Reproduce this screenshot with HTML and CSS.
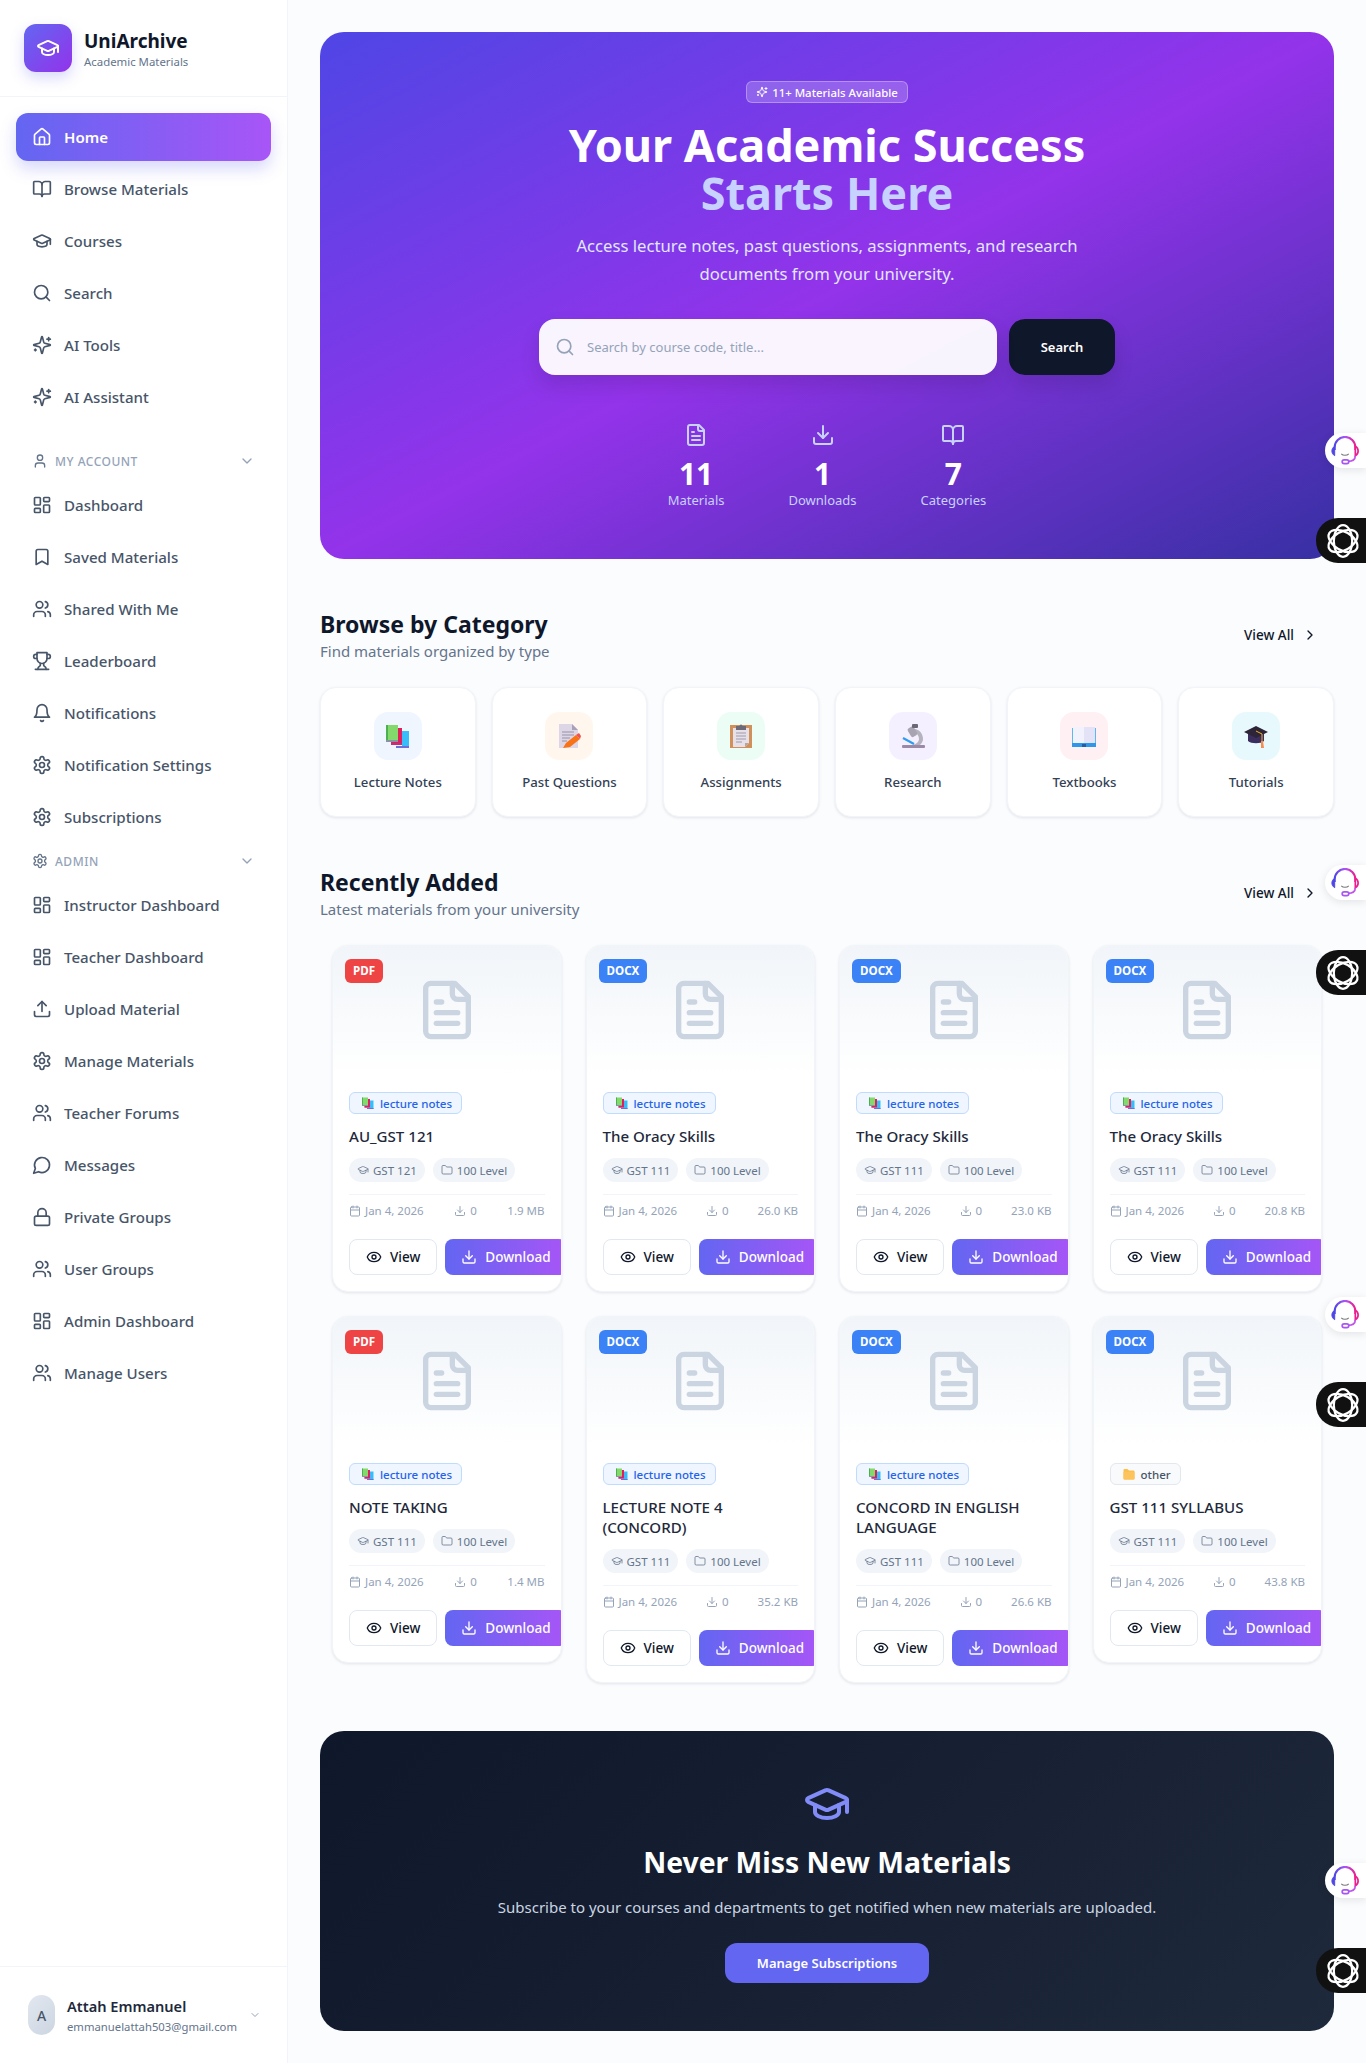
FILE: index.html
```html
<!DOCTYPE html>
<html lang="en">

<head>
    <meta charset="UTF-8">
    <meta name="viewport" content="width=device-width, initial-scale=1.0">
    <title>UniArchive</title>
    <link rel="stylesheet" href="styles.css">
</head>

<body>
    <!-- icon set -->
    <svg class="sprite" xmlns="http://www.w3.org/2000/svg">
        <symbol id="i-home" viewBox="0 0 24 24"><path d="M15 21v-8a1 1 0 0 0-1-1h-4a1 1 0 0 0-1 1v8"/><path d="M3 10a2 2 0 0 1 .709-1.528l7-5.999a2 2 0 0 1 2.582 0l7 5.999A2 2 0 0 1 21 10v9a2 2 0 0 1-2 2H5a2 2 0 0 1-2-2z"/></symbol>
        <symbol id="i-book" viewBox="0 0 24 24"><path d="M12 7v14"/><path d="M3 18a1 1 0 0 1-1-1V4a1 1 0 0 1 1-1h5a4 4 0 0 1 4 4 4 4 0 0 1 4-4h5a1 1 0 0 1 1 1v13a1 1 0 0 1-1 1h-6a3 3 0 0 0-3 3 3 3 0 0 0-3-3z"/></symbol>
        <symbol id="i-cap" viewBox="0 0 24 24"><path d="M21.42 10.922a1 1 0 0 0-.019-1.838L12.83 5.18a2 2 0 0 0-1.66 0L2.6 9.08a1 1 0 0 0 0 1.832l8.57 3.908a2 2 0 0 0 1.66 0z"/><path d="M22 10v6"/><path d="M6 12.5V16a6 3 0 0 0 12 0v-3.5"/></symbol>
        <symbol id="i-search" viewBox="0 0 24 24"><circle cx="11" cy="11" r="8"/><path d="m21 21-4.3-4.3"/></symbol>
        <symbol id="i-spark" viewBox="0 0 24 24"><path d="M9.937 15.5A2 2 0 0 0 8.5 14.063l-6.135-1.582a.5.5 0 0 1 0-.962L8.5 9.936A2 2 0 0 0 9.937 8.5l1.582-6.135a.5.5 0 0 1 .963 0L14.063 8.5A2 2 0 0 0 15.5 9.937l6.135 1.581a.5.5 0 0 1 0 .964L15.5 14.063a2 2 0 0 0-1.437 1.437l-1.582 6.135a.5.5 0 0 1-.963 0z"/><path d="M20 3v4"/><path d="M22 5h-4"/><path d="M4 17v2"/><path d="M5 18H3"/></symbol>
        <symbol id="i-user" viewBox="0 0 24 24"><path d="M19 21v-2a4 4 0 0 0-4-4H9a4 4 0 0 0-4 4v2"/><circle cx="12" cy="7" r="4"/></symbol>
        <symbol id="i-dash" viewBox="0 0 24 24"><rect x="3" y="3" width="7" height="9" rx="1"/><rect x="14" y="3" width="7" height="5" rx="1"/><rect x="14" y="12" width="7" height="9" rx="1"/><rect x="3" y="16" width="7" height="5" rx="1"/></symbol>
        <symbol id="i-bookmark" viewBox="0 0 24 24"><path d="m19 21-7-4-7 4V5a2 2 0 0 1 2-2h10a2 2 0 0 1 2 2v16z"/></symbol>
        <symbol id="i-users" viewBox="0 0 24 24"><path d="M16 21v-2a4 4 0 0 0-4-4H6a4 4 0 0 0-4 4v2"/><circle cx="9" cy="7" r="4"/><path d="M22 21v-2a4 4 0 0 0-3-3.87"/><path d="M16 3.13a4 4 0 0 1 0 7.75"/></symbol>
        <symbol id="i-trophy" viewBox="0 0 24 24"><path d="M6 9H4.5a2.5 2.5 0 0 1 0-5H6"/><path d="M18 9h1.5a2.5 2.5 0 0 0 0-5H18"/><path d="M4 22h16"/><path d="M10 14.66V17c0 .55-.47.98-.97 1.21C7.85 18.75 7 20.24 7 22"/><path d="M14 14.66V17c0 .55.47.98.97 1.21C16.15 18.75 17 20.24 17 22"/><path d="M18 2H6v7a6 6 0 0 0 12 0V2Z"/></symbol>
        <symbol id="i-bell" viewBox="0 0 24 24"><path d="M6 8a6 6 0 0 1 12 0c0 7 3 9 3 9H3s3-2 3-9"/><path d="M10.3 21a1.94 1.94 0 0 0 3.4 0"/></symbol>
        <symbol id="i-gear" viewBox="0 0 24 24"><path d="M12.22 2h-.44a2 2 0 0 0-2 2v.18a2 2 0 0 1-1 1.73l-.43.25a2 2 0 0 1-2 0l-.15-.08a2 2 0 0 0-2.73.73l-.22.38a2 2 0 0 0 .73 2.73l.15.1a2 2 0 0 1 1 1.72v.51a2 2 0 0 1-1 1.74l-.15.09a2 2 0 0 0-.73 2.73l.22.38a2 2 0 0 0 2.73.73l.15-.08a2 2 0 0 1 2 0l.43.25a2 2 0 0 1 1 1.73V20a2 2 0 0 0 2 2h.44a2 2 0 0 0 2-2v-.18a2 2 0 0 1 1-1.73l.43-.25a2 2 0 0 1 2 0l.15.08a2 2 0 0 0 2.73-.73l.22-.39a2 2 0 0 0-.73-2.73l-.15-.08a2 2 0 0 1-1-1.74v-.5a2 2 0 0 1 1-1.74l.15-.09a2 2 0 0 0 .73-2.73l-.22-.38a2 2 0 0 0-2.73-.73l-.15.08a2 2 0 0 1-2 0l-.43-.25a2 2 0 0 1-1-1.73V4a2 2 0 0 0-2-2z"/><circle cx="12" cy="12" r="3"/></symbol>
        <symbol id="i-upload" viewBox="0 0 24 24"><path d="M21 15v4a2 2 0 0 1-2 2H5a2 2 0 0 1-2-2v-4"/><path d="m17 8-5-5-5 5"/><path d="M12 3v12"/></symbol>
        <symbol id="i-download" viewBox="0 0 24 24"><path d="M21 15v4a2 2 0 0 1-2 2H5a2 2 0 0 1-2-2v-4"/><path d="m7 10 5 5 5-5"/><path d="M12 15V3"/></symbol>
        <symbol id="i-message" viewBox="0 0 24 24"><path d="M7.9 20A9 9 0 1 0 4 16.1L2 22Z"/></symbol>
        <symbol id="i-lock" viewBox="0 0 24 24"><rect x="3" y="11" width="18" height="11" rx="2"/><path d="M7 11V7a5 5 0 0 1 10 0v4"/></symbol>
        <symbol id="i-down" viewBox="0 0 24 24"><path d="m6 9 6 6 6-6"/></symbol>
        <symbol id="i-right" viewBox="0 0 24 24"><path d="m9 18 6-6-6-6"/></symbol>
        <symbol id="i-eye" viewBox="0 0 24 24"><path d="M2.062 12.348a1 1 0 0 1 0-.696 10.75 10.75 0 0 1 19.876 0 1 1 0 0 1 0 .696 10.75 10.75 0 0 1-19.876 0"/><circle cx="12" cy="12" r="3"/></symbol>
        <symbol id="i-cal" viewBox="0 0 24 24"><path d="M8 2v4"/><path d="M16 2v4"/><rect x="3" y="4" width="18" height="18" rx="2"/><path d="M3 10h18"/></symbol>
        <symbol id="i-folder" viewBox="0 0 24 24"><path d="M20 20a2 2 0 0 0 2-2V8a2 2 0 0 0-2-2h-7.9a2 2 0 0 1-1.69-.9L9.6 3.9A2 2 0 0 0 7.93 3H4a2 2 0 0 0-2 2v13a2 2 0 0 0 2 2Z"/></symbol>
        <symbol id="i-file" viewBox="0 0 24 24"><path d="M15 2H6a2 2 0 0 0-2 2v16a2 2 0 0 0 2 2h12a2 2 0 0 0 2-2V7Z"/><path d="M14 2v4a2 2 0 0 0 2 2h4"/><path d="M10 9H8"/><path d="M16 13H8"/><path d="M16 17H8"/></symbol>

        <!-- coloured category pictures -->
        <symbol id="e-books" viewBox="0 0 24 24"><rect x="16" y="7" width="7" height="17" fill="#38bdf8"/><rect x="10" y="22" width="13" height="2" fill="#6d6fd8"/><rect x="5" y="4" width="11" height="17" fill="#e11d5b"/><rect x="5" y="19" width="11" height="2" fill="#b83280"/><rect x="0" y="1" width="12" height="16" fill="#84d96c"/><rect x="0" y="1" width="2" height="16" fill="#4caf50"/><rect x="0" y="16" width="12" height="2" fill="#8a94a6"/></symbol>
        <symbol id="e-memo" viewBox="0 0 24 24"><path d="M2 0h13l6 6v18H2z" fill="#dcd6e6"/><path d="M15 0l6 6h-6z" fill="#a89fb8"/><path d="M5 8h12M5 11h12M5 14h8M5 17h5" stroke="#9a92a8" stroke-width="1"/><path d="M6 24l3-5 10-8 4 4-10 8z" fill="#f97316"/><path d="M19 11l3-2 2 3-1 3z" fill="#ef5350"/></symbol>
        <symbol id="e-clip" viewBox="0 0 24 24"><rect x="1" y="1" width="22" height="23" fill="#d1905a"/><path d="M4 4h16v15l-4 4H4z" fill="#e6e0ea"/><path d="M16 23l4-4h-4z" fill="#b9a5a0"/><path d="M7 2h10v4H7z" fill="#6f6a78"/><circle cx="12" cy="2" r="1.5" fill="#6f6a78"/><path d="M7 9h10M7 12h10M7 15h10M7 18h6" stroke="#a09aa8" stroke-width="1"/></symbol>
        <symbol id="e-scope" viewBox="0 0 24 24"><rect x="1" y="21" width="23" height="3" rx="1" fill="#9a8aa8"/><path d="M14 5c5 1 8 5 8 10 0 2-1 4-3 6h-7c3-1 6-3 6-6 0-3-2-6-5-7z" fill="#b5b3bd"/><rect x="8" y="3" width="7" height="10" rx="2" transform="rotate(-30 11 8)" fill="#a8a4b2"/><rect x="11" y="0" width="6" height="4" rx="1" fill="#6b6775"/><path d="M2 14l11 6" stroke="#2f9cf0" stroke-width="2.2"/></symbol>
        <symbol id="e-open" viewBox="0 0 24 24"><rect x="0" y="4" width="24" height="17" fill="#5bb8f0"/><path d="M1 3h11v16H1z" fill="#f1f2fb"/><path d="M12 3h11v16H12z" fill="#e3e2f7"/><rect x="0" y="19" width="24" height="4" fill="#2f96e8"/><rect x="10" y="20" width="4" height="3" fill="#1f5fa8"/></symbol>
        <symbol id="e-grad" viewBox="0 0 24 24"><path d="M4 10v7c3 3 13 3 16 0v-7z" fill="#3b2d5e"/><path d="M12 2L24 8 12 14 0 8z" fill="#2d2438"/><path d="M12 7l6 3v8" fill="none" stroke="#f0b429" stroke-width="1"/><path d="M17 17h2l1 7h-3z" fill="#f78c4f"/></symbol>
        <symbol id="e-folder" viewBox="0 0 24 24"><path d="M1 4a2 2 0 0 1 2-2h6l3 3h9a2 2 0 0 1 2 2v14a2 2 0 0 1-2 2H3a2 2 0 0 1-2-2z" fill="#fbbf4d"/><path d="M1 8h22v13a2 2 0 0 1-2 2H3a2 2 0 0 1-2-2z" fill="#fdc45e"/></symbol>

        <linearGradient id="headset-grad" x1="0" y1="0" x2="1" y2="0">
            <stop offset="0" stop-color="#4f46e5"/>
            <stop offset="0.5" stop-color="#a855f7"/>
            <stop offset="1" stop-color="#ec1e8f"/>
        </linearGradient>
        <symbol id="w-headset" viewBox="0 0 32 32"><path d="M5 15v-3a11 11 0 0 1 22 0v3" fill="none" stroke="url(#headset-grad)" stroke-width="2.2"/><path d="M5 11c-2 1-3 3-3 5s1 4 3 5z" fill="#4f46e5" stroke="#4f46e5"/><path d="M27 11c2 1 3 3 3 5s-1 4-3 5z" fill="#fff" stroke="#ec1e8f" stroke-width="1.8"/><path d="M12 19c2 2 6 2 8 0" fill="none" stroke="#777" stroke-width="1.2"/><path d="M27 21c0 4-3 6-8 6" fill="none" stroke="#c054e8" stroke-width="1.8"/><rect x="13" y="25.5" width="7" height="4" rx="2" fill="#fff" stroke="#a855f7" stroke-width="1.8"/></symbol>
        <symbol id="w-knot" viewBox="0 0 34 34"><g fill="none" stroke="#fff" stroke-width="2.2"><ellipse cx="17" cy="17" rx="15.8" ry="9.2" transform="rotate(30 17 17)"/><ellipse cx="17" cy="17" rx="15.8" ry="9.2" transform="rotate(90 17 17)"/><ellipse cx="17" cy="17" rx="15.8" ry="9.2" transform="rotate(150 17 17)"/></g></symbol>
    </svg>

    <div class="app">
        <aside class="sidebar">
            <div class="brand">
                <div class="brand-logo"><svg class="ico ico-24"><use href="#i-cap"/></svg></div>
                <div>
                    <div class="brand-name">UniArchive</div>
                    <div class="brand-sub">Academic Materials</div>
                </div>
            </div>

            <nav class="nav">
                <a class="nav-item active"><svg class="ico"><use href="#i-home"/></svg>Home</a>
                <a class="nav-item"><svg class="ico"><use href="#i-book"/></svg>Browse Materials</a>
                <a class="nav-item"><svg class="ico"><use href="#i-cap"/></svg>Courses</a>
                <a class="nav-item"><svg class="ico"><use href="#i-search"/></svg>Search</a>
                <a class="nav-item"><svg class="ico"><use href="#i-spark"/></svg>AI Tools</a>
                <a class="nav-item"><svg class="ico"><use href="#i-spark"/></svg>AI Assistant</a>

                <div class="nav-label first"><svg class="ico ico-16"><use href="#i-user"/></svg><span>My Account</span><svg class="ico ico-16 nav-chev"><use href="#i-down"/></svg></div>
                <a class="nav-item"><svg class="ico"><use href="#i-dash"/></svg>Dashboard</a>
                <a class="nav-item"><svg class="ico"><use href="#i-bookmark"/></svg>Saved Materials</a>
                <a class="nav-item"><svg class="ico"><use href="#i-users"/></svg>Shared With Me</a>
                <a class="nav-item"><svg class="ico"><use href="#i-trophy"/></svg>Leaderboard</a>
                <a class="nav-item"><svg class="ico"><use href="#i-bell"/></svg>Notifications</a>
                <a class="nav-item"><svg class="ico"><use href="#i-gear"/></svg>Notification Settings</a>
                <a class="nav-item"><svg class="ico"><use href="#i-gear"/></svg>Subscriptions</a>

                <div class="nav-label"><svg class="ico ico-16"><use href="#i-gear"/></svg><span>Admin</span><svg class="ico ico-16 nav-chev"><use href="#i-down"/></svg></div>
                <a class="nav-item"><svg class="ico"><use href="#i-dash"/></svg>Instructor Dashboard</a>
                <a class="nav-item"><svg class="ico"><use href="#i-dash"/></svg>Teacher Dashboard</a>
                <a class="nav-item"><svg class="ico"><use href="#i-upload"/></svg>Upload Material</a>
                <a class="nav-item"><svg class="ico"><use href="#i-gear"/></svg>Manage Materials</a>
                <a class="nav-item"><svg class="ico"><use href="#i-users"/></svg>Teacher Forums</a>
                <a class="nav-item"><svg class="ico"><use href="#i-message"/></svg>Messages</a>
                <a class="nav-item"><svg class="ico"><use href="#i-lock"/></svg>Private Groups</a>
                <a class="nav-item"><svg class="ico"><use href="#i-users"/></svg>User Groups</a>
                <a class="nav-item"><svg class="ico"><use href="#i-dash"/></svg>Admin Dashboard</a>
                <a class="nav-item"><svg class="ico"><use href="#i-users"/></svg>Manage Users</a>
            </nav>

            <div class="user-box">
                <div class="avatar">A</div>
                <div class="user-text">
                    <div class="user-name">Attah Emmanuel</div>
                    <div class="user-mail">emmanuelattah503@gmail.com</div>
                </div>
                <svg class="ico ico-12 user-chev"><use href="#i-down"/></svg>
            </div>
        </aside>

        <main class="main">
            <section class="hero">
                <div class="hero-badge"><svg class="ico ico-12"><use href="#i-spark"/></svg>11+ Materials Available</div>
                <h1 class="hero-title"><span class="line">Your Academic Success</span><span class="line accent">Starts Here</span></h1>
                <p class="hero-text">Access lecture notes, past questions, assignments, and research documents from your university.</p>
                <form class="hero-search">
                    <div class="search-box">
                        <svg class="ico search-ico"><use href="#i-search"/></svg>
                        <input type="text" placeholder="Search by course code, title...">
                    </div>
                    <button type="button" class="search-btn">Search</button>
                </form>
                <div class="hero-stats">
                    <div class="stat"><svg class="ico ico-24"><use href="#i-file"/></svg><b>11</b><span>Materials</span></div>
                    <div class="stat"><svg class="ico ico-24"><use href="#i-download"/></svg><b>1</b><span>Downloads</span></div>
                    <div class="stat"><svg class="ico ico-24"><use href="#i-book"/></svg><b>7</b><span>Categories</span></div>
                </div>
            </section>

            <section class="section">
                <div class="section-head">
                    <div>
                        <h2>Browse by Category</h2>
                        <p>Find materials organized by type</p>
                    </div>
                    <a class="view-all">View All<svg class="ico ico-16"><use href="#i-right"/></svg></a>
                </div>
                <div class="cat-grid">
                    <div class="cat"><div class="cat-tile blue"><svg class="pic"><use href="#e-books"/></svg></div>Lecture Notes</div>
                    <div class="cat"><div class="cat-tile orange"><svg class="pic"><use href="#e-memo"/></svg></div>Past Questions</div>
                    <div class="cat"><div class="cat-tile green"><svg class="pic"><use href="#e-clip"/></svg></div>Assignments</div>
                    <div class="cat"><div class="cat-tile purple"><svg class="pic"><use href="#e-scope"/></svg></div>Research</div>
                    <div class="cat"><div class="cat-tile pink"><svg class="pic"><use href="#e-open"/></svg></div>Textbooks</div>
                    <div class="cat"><div class="cat-tile cyan"><svg class="pic"><use href="#e-grad"/></svg></div>Tutorials</div>
                </div>
            </section>

            <section class="section">
                <div class="section-head">
                    <div>
                        <h2>Recently Added</h2>
                        <p>Latest materials from your university</p>
                    </div>
                    <a class="view-all">View All<svg class="ico ico-16"><use href="#i-right"/></svg></a>
                </div>
                <div class="doc-grid">

                    <article class="doc">
                        <div class="doc-thumb"><span class="doc-type pdf">PDF</span><svg class="ico doc-ico"><use href="#i-file"/></svg></div>
                        <div class="doc-body">
                            <span class="chip"><svg class="pic-sm"><use href="#e-books"/></svg>lecture notes</span>
                            <h3>AU_GST 121</h3>
                            <div class="pills">
                                <span class="pill"><svg class="ico ico-12"><use href="#i-cap"/></svg>GST 121</span>
                                <span class="pill"><svg class="ico ico-12"><use href="#i-folder"/></svg>100 Level</span>
                            </div>
                            <div class="meta">
                                <span><svg class="ico ico-12"><use href="#i-cal"/></svg>Jan 4, 2026</span>
                                <span><svg class="ico ico-12"><use href="#i-download"/></svg>0</span>
                                <span>1.9 MB</span>
                            </div>
                            <div class="actions">
                                <a class="btn-view"><svg class="ico ico-16"><use href="#i-eye"/></svg>View</a>
                                <a class="btn-get"><svg class="ico ico-16"><use href="#i-download"/></svg>Download</a>
                            </div>
                        </div>
                    </article>

                    <article class="doc">
                        <div class="doc-thumb"><span class="doc-type docx">DOCX</span><svg class="ico doc-ico"><use href="#i-file"/></svg></div>
                        <div class="doc-body">
                            <span class="chip"><svg class="pic-sm"><use href="#e-books"/></svg>lecture notes</span>
                            <h3>The Oracy Skills</h3>
                            <div class="pills">
                                <span class="pill"><svg class="ico ico-12"><use href="#i-cap"/></svg>GST 111</span>
                                <span class="pill"><svg class="ico ico-12"><use href="#i-folder"/></svg>100 Level</span>
                            </div>
                            <div class="meta">
                                <span><svg class="ico ico-12"><use href="#i-cal"/></svg>Jan 4, 2026</span>
                                <span><svg class="ico ico-12"><use href="#i-download"/></svg>0</span>
                                <span>26.0 KB</span>
                            </div>
                            <div class="actions">
                                <a class="btn-view"><svg class="ico ico-16"><use href="#i-eye"/></svg>View</a>
                                <a class="btn-get"><svg class="ico ico-16"><use href="#i-download"/></svg>Download</a>
                            </div>
                        </div>
                    </article>

                    <article class="doc">
                        <div class="doc-thumb"><span class="doc-type docx">DOCX</span><svg class="ico doc-ico"><use href="#i-file"/></svg></div>
                        <div class="doc-body">
                            <span class="chip"><svg class="pic-sm"><use href="#e-books"/></svg>lecture notes</span>
                            <h3>The Oracy Skills</h3>
                            <div class="pills">
                                <span class="pill"><svg class="ico ico-12"><use href="#i-cap"/></svg>GST 111</span>
                                <span class="pill"><svg class="ico ico-12"><use href="#i-folder"/></svg>100 Level</span>
                            </div>
                            <div class="meta">
                                <span><svg class="ico ico-12"><use href="#i-cal"/></svg>Jan 4, 2026</span>
                                <span><svg class="ico ico-12"><use href="#i-download"/></svg>0</span>
                                <span>23.0 KB</span>
                            </div>
                            <div class="actions">
                                <a class="btn-view"><svg class="ico ico-16"><use href="#i-eye"/></svg>View</a>
                                <a class="btn-get"><svg class="ico ico-16"><use href="#i-download"/></svg>Download</a>
                            </div>
                        </div>
                    </article>

                    <article class="doc">
                        <div class="doc-thumb"><span class="doc-type docx">DOCX</span><svg class="ico doc-ico"><use href="#i-file"/></svg></div>
                        <div class="doc-body">
                            <span class="chip"><svg class="pic-sm"><use href="#e-books"/></svg>lecture notes</span>
                            <h3>The Oracy Skills</h3>
                            <div class="pills">
                                <span class="pill"><svg class="ico ico-12"><use href="#i-cap"/></svg>GST 111</span>
                                <span class="pill"><svg class="ico ico-12"><use href="#i-folder"/></svg>100 Level</span>
                            </div>
                            <div class="meta">
                                <span><svg class="ico ico-12"><use href="#i-cal"/></svg>Jan 4, 2026</span>
                                <span><svg class="ico ico-12"><use href="#i-download"/></svg>0</span>
                                <span>20.8 KB</span>
                            </div>
                            <div class="actions">
                                <a class="btn-view"><svg class="ico ico-16"><use href="#i-eye"/></svg>View</a>
                                <a class="btn-get"><svg class="ico ico-16"><use href="#i-download"/></svg>Download</a>
                            </div>
                        </div>
                    </article>

                    <article class="doc">
                        <div class="doc-thumb"><span class="doc-type pdf">PDF</span><svg class="ico doc-ico"><use href="#i-file"/></svg></div>
                        <div class="doc-body">
                            <span class="chip"><svg class="pic-sm"><use href="#e-books"/></svg>lecture notes</span>
                            <h3>NOTE TAKING</h3>
                            <div class="pills">
                                <span class="pill"><svg class="ico ico-12"><use href="#i-cap"/></svg>GST 111</span>
                                <span class="pill"><svg class="ico ico-12"><use href="#i-folder"/></svg>100 Level</span>
                            </div>
                            <div class="meta">
                                <span><svg class="ico ico-12"><use href="#i-cal"/></svg>Jan 4, 2026</span>
                                <span><svg class="ico ico-12"><use href="#i-download"/></svg>0</span>
                                <span>1.4 MB</span>
                            </div>
                            <div class="actions">
                                <a class="btn-view"><svg class="ico ico-16"><use href="#i-eye"/></svg>View</a>
                                <a class="btn-get"><svg class="ico ico-16"><use href="#i-download"/></svg>Download</a>
                            </div>
                        </div>
                    </article>

                    <article class="doc">
                        <div class="doc-thumb"><span class="doc-type docx">DOCX</span><svg class="ico doc-ico"><use href="#i-file"/></svg></div>
                        <div class="doc-body">
                            <span class="chip"><svg class="pic-sm"><use href="#e-books"/></svg>lecture notes</span>
                            <h3>LECTURE NOTE 4 (CONCORD)</h3>
                            <div class="pills">
                                <span class="pill"><svg class="ico ico-12"><use href="#i-cap"/></svg>GST 111</span>
                                <span class="pill"><svg class="ico ico-12"><use href="#i-folder"/></svg>100 Level</span>
                            </div>
                            <div class="meta">
                                <span><svg class="ico ico-12"><use href="#i-cal"/></svg>Jan 4, 2026</span>
                                <span><svg class="ico ico-12"><use href="#i-download"/></svg>0</span>
                                <span>35.2 KB</span>
                            </div>
                            <div class="actions">
                                <a class="btn-view"><svg class="ico ico-16"><use href="#i-eye"/></svg>View</a>
                                <a class="btn-get"><svg class="ico ico-16"><use href="#i-download"/></svg>Download</a>
                            </div>
                        </div>
                    </article>

                    <article class="doc">
                        <div class="doc-thumb"><span class="doc-type docx">DOCX</span><svg class="ico doc-ico"><use href="#i-file"/></svg></div>
                        <div class="doc-body">
                            <span class="chip"><svg class="pic-sm"><use href="#e-books"/></svg>lecture notes</span>
                            <h3>CONCORD IN ENGLISH LANGUAGE</h3>
                            <div class="pills">
                                <span class="pill"><svg class="ico ico-12"><use href="#i-cap"/></svg>GST 111</span>
                                <span class="pill"><svg class="ico ico-12"><use href="#i-folder"/></svg>100 Level</span>
                            </div>
                            <div class="meta">
                                <span><svg class="ico ico-12"><use href="#i-cal"/></svg>Jan 4, 2026</span>
                                <span><svg class="ico ico-12"><use href="#i-download"/></svg>0</span>
                                <span>26.6 KB</span>
                            </div>
                            <div class="actions">
                                <a class="btn-view"><svg class="ico ico-16"><use href="#i-eye"/></svg>View</a>
                                <a class="btn-get"><svg class="ico ico-16"><use href="#i-download"/></svg>Download</a>
                            </div>
                        </div>
                    </article>

                    <article class="doc">
                        <div class="doc-thumb"><span class="doc-type docx">DOCX</span><svg class="ico doc-ico"><use href="#i-file"/></svg></div>
                        <div class="doc-body">
                            <span class="chip other"><svg class="pic-sm"><use href="#e-folder"/></svg>other</span>
                            <h3>GST 111 SYLLABUS</h3>
                            <div class="pills">
                                <span class="pill"><svg class="ico ico-12"><use href="#i-cap"/></svg>GST 111</span>
                                <span class="pill"><svg class="ico ico-12"><use href="#i-folder"/></svg>100 Level</span>
                            </div>
                            <div class="meta">
                                <span><svg class="ico ico-12"><use href="#i-cal"/></svg>Jan 4, 2026</span>
                                <span><svg class="ico ico-12"><use href="#i-download"/></svg>0</span>
                                <span>43.8 KB</span>
                            </div>
                            <div class="actions">
                                <a class="btn-view"><svg class="ico ico-16"><use href="#i-eye"/></svg>View</a>
                                <a class="btn-get"><svg class="ico ico-16"><use href="#i-download"/></svg>Download</a>
                            </div>
                        </div>
                    </article>

                </div>
            </section>

            <section class="cta">
                <svg class="ico cta-ico"><use href="#i-cap"/></svg>
                <h2>Never Miss New Materials</h2>
                <p>Subscribe to your courses and departments to get notified when new materials are uploaded.</p>
                <a class="cta-btn">Manage Subscriptions</a>
            </section>
        </main>
    </div>

    <!-- floating widgets injected over the page -->
    <div class="fab-head t1"><svg><use href="#w-headset"/></svg></div>
    <div class="fab-knot k1"><svg><use href="#w-knot"/></svg></div>
    <div class="fab-head t2"><svg><use href="#w-headset"/></svg></div>
    <div class="fab-knot k2"><svg><use href="#w-knot"/></svg></div>
    <div class="fab-head t3"><svg><use href="#w-headset"/></svg></div>
    <div class="fab-knot k3"><svg><use href="#w-knot"/></svg></div>
    <div class="fab-head t4"><svg><use href="#w-headset"/></svg></div>
    <div class="fab-knot k4"><svg><use href="#w-knot"/></svg></div>
</body>

</html>
```

FILE: styles.css
```css
* {
    margin: 0;
    padding: 0;
    box-sizing: border-box;
}

body {
    position: relative;
    background: #fbfcfe;
    color: #0f172a;
    font-family: "Noto Sans", "Open Sans", Arial, sans-serif;
    overflow-x: hidden;
}

.sprite {
    position: absolute;
    width: 0;
    height: 0;
}

.ico {
    width: 20px;
    height: 20px;
    flex-shrink: 0;
    fill: none;
    stroke: currentColor;
    stroke-width: 2;
    stroke-linecap: round;
    stroke-linejoin: round;
}

.ico-12 { width: 12px; height: 12px; }
.ico-16 { width: 16px; height: 16px; }
.ico-24 { width: 24px; height: 24px; }

.app {
    display: flex;
    min-height: 2063px;
}

/* sidebar */
.sidebar {
    width: 288px;
    flex-shrink: 0;
    display: flex;
    flex-direction: column;
    background: #fff;
    border-right: 1px solid #f1f5f9;
}

.brand {
    height: 97px;
    display: flex;
    align-items: center;
    gap: 12px;
    padding: 0 24px;
    border-bottom: 1px solid #f1f5f9;
}

.brand-logo {
    width: 48px;
    height: 48px;
    display: flex;
    align-items: center;
    justify-content: center;
    border-radius: 12px;
    color: #fff;
    background: linear-gradient(135deg, #6366f1, #9333ea);
    box-shadow: 0 6px 14px rgba(99, 102, 241, 0.25);
}

.brand-name {
    padding-top: 3px;
    font-size: 19px;
    font-weight: 700;
    line-height: 24px;
}

.brand-sub {
    font-size: 11.4px;
    line-height: 17px;
    color: #64748b;
}

.nav {
    padding: 16px 16px 0;
}

.nav-item {
    display: flex;
    align-items: center;
    gap: 12px;
    height: 48px;
    margin-bottom: 4px;
    padding: 0 16px;
    border-radius: 12px;
    font-size: 15.1px;
    font-weight: 500;
    color: #475569;
}

.nav-item.active {
    color: #fff;
    font-weight: 600;
    background: linear-gradient(90deg, #6366f1, #a855f7);
    box-shadow: 0 8px 16px rgba(99, 102, 241, 0.25);
}

.nav-label {
    display: flex;
    align-items: center;
    gap: 7px;
    height: 32px;
    margin-bottom: 4px;
    padding: 0 16px;
    font-size: 12px;
    font-weight: 500;
    letter-spacing: 0.5px;
    text-transform: uppercase;
    color: #94a3b8;
}

.nav-label .ico:first-child {
    color: #64748b;
}

.nav-label.first {
    margin-top: 24px;
}

.nav-chev {
    margin-left: auto;
}

.user-box {
    height: 97px;
    margin-top: auto;
    display: flex;
    align-items: center;
    padding: 0 28px;
    gap: 12px;
    border-top: 1px solid #f1f5f9;
}

.avatar {
    width: 27px;
    height: 40px;
    flex-shrink: 0;
    display: flex;
    align-items: center;
    justify-content: center;
    border-radius: 14px;
    background: linear-gradient(135deg, #e2e8f0, #cbd5e1);
    font-size: 14px;
    font-weight: 500;
    color: #475569;
}

.user-text {
    padding-top: 3px;
}

.user-name {
    font-size: 14.6px;
    font-weight: 600;
    line-height: 20px;
    color: #1e293b;
}

.user-mail {
    margin-top: 1px;
    font-size: 11.3px;
    line-height: 20px;
    color: #64748b;
    white-space: nowrap;
}

.user-chev {
    color: #94a3b8;
    margin-left: auto;
    margin-right: 6px;
}

/* main column */
.main {
    flex: 1;
    min-width: 0;
    padding: 32px;
}

.hero {
    height: 527px;
    display: flex;
    flex-direction: column;
    align-items: center;
    padding-top: 49px;
    border-radius: 24px;
    background: linear-gradient(to bottom right, #4f46e5 0%, #9333ea 50%, #3730a3 100%);
    color: #fff;
}

.hero-badge {
    display: flex;
    align-items: center;
    gap: 4px;
    height: 22px;
    padding: 0 9px;
    border: 1px solid rgba(255, 255, 255, 0.3);
    border-radius: 6px;
    background: rgba(255, 255, 255, 0.2);
    font-size: 11.4px;
    font-weight: 500;
}

.hero-title {
    margin-top: 18px;
    font-size: 45px;
    font-weight: 700;
    text-align: center;
}

.hero-title .line {
    display: block;
    line-height: 48px;
}

.hero-title .accent {
    color: #c7d2fe;
}

.hero-text {
    width: 576px;
    margin-top: 15px;
    font-size: 16.7px;
    line-height: 28px;
    text-align: center;
    color: #e0e7ff;
}

.hero-search {
    display: flex;
    gap: 12px;
    width: 576px;
    margin-top: 31px;
}

.search-box {
    position: relative;
    flex: 1;
}

.search-box input {
    width: 100%;
    height: 56px;
    padding-left: 48px;
    border: none;
    border-radius: 16px;
    outline: none;
    background: rgba(255, 255, 255, 0.95);
    font: 13px "Noto Sans", sans-serif;
    box-shadow: 0 10px 20px rgba(0, 0, 0, 0.12);
}

.search-box input::placeholder {
    color: #94a3b8;
}

.search-ico {
    position: absolute;
    left: 16px;
    top: 18px;
    color: #94a3b8;
}

.search-btn {
    width: 106px;
    height: 56px;
    border: none;
    border-radius: 16px;
    background: #0f172a;
    color: #fff;
    font: 600 13px "Noto Sans", sans-serif;
    box-shadow: 0 10px 20px rgba(0, 0, 0, 0.12);
}

.hero-stats {
    display: flex;
    gap: 64px;
    margin-top: 48px;
}

.stat {
    display: flex;
    flex-direction: column;
    align-items: center;
}

.stat .ico {
    color: #c7d2fe;
}

.stat b {
    margin-top: 11px;
    font-size: 30px;
    line-height: 32px;
}

.stat span {
    font-size: 13px;
    line-height: 20px;
    color: #c7d2fe;
}

.section {
    margin-top: 48px;
}

.section-head {
    display: flex;
    justify-content: space-between;
    align-items: center;
    margin-bottom: 24px;
}

.section-head h2 {
    margin: 1px 0 -1px;
    font-size: 23px;
    font-weight: 700;
    line-height: 32px;
}

.section-head p {
    font-size: 15px;
    line-height: 24px;
    color: #64748b;
}

.view-all {
    display: flex;
    align-items: center;
    gap: 8px;
    padding: 0 16px;
    height: 36px;
    font-size: 13.5px;
    font-weight: 500;
}

.cat-grid {
    display: grid;
    grid-template-columns: repeat(6, 1fr);
    gap: 16px;
}

.cat {
    height: 130px;
    display: flex;
    flex-direction: column;
    align-items: center;
    padding-top: 24px;
    border: 1px solid #f1f5f9;
    border-radius: 16px;
    background: #fff;
    box-shadow: 0 1px 3px rgba(15, 23, 42, 0.1);
    font-size: 13.2px;
    font-weight: 500;
    line-height: 20px;
    color: #334155;
}

.cat-tile {
    width: 48px;
    height: 48px;
    margin-bottom: 12px;
    display: flex;
    align-items: center;
    justify-content: center;
    border-radius: 14px;
}

.cat-tile.blue { background: #eff6ff; }
.cat-tile.orange { background: #fff7ed; }
.cat-tile.green { background: #ecfdf5; }
.cat-tile.purple { background: #f5f0ff; }
.cat-tile.pink { background: #fff0f3; }
.cat-tile.cyan { background: #e8f9fd; }

.pic {
    width: 24px;
    height: 24px;
}

.pic-sm {
    width: 12px;
    height: 12px;
    flex-shrink: 0;
}

.doc-grid {
    display: grid;
    grid-template-columns: repeat(4, 1fr);
    gap: 24px;
    align-items: start;
    padding: 0 12px;
}

.doc {
    overflow: hidden;
    border: 1px solid #f1f5f9;
    border-radius: 16px;
    background: #fff;
    box-shadow: 0 1px 3px rgba(15, 23, 42, 0.1);
}

.doc-thumb {
    position: relative;
    height: 130px;
    display: flex;
    align-items: center;
    justify-content: center;
    background: linear-gradient(180deg, #f1f5f9, #fff);
}

.doc-type {
    position: absolute;
    left: 12px;
    top: 13px;
    height: 24px;
    padding: 0 8px;
    border-radius: 6px;
    color: #fff;
    font-size: 11.6px;
    font-weight: 700;
    line-height: 24px;
}

.doc-type.pdf { background: #ef4444; }
.doc-type.docx { background: #3b82f6; }

.doc-ico {
    width: 64px;
    height: 64px;
    margin-top: -2px;
    color: #cbd5e1;
}

.doc-body {
    padding: 16px;
}

.chip {
    display: inline-flex;
    align-items: center;
    gap: 6px;
    height: 22px;
    padding: 0 9px 0 12px;
    border: 1px solid #bfdbfe;
    border-radius: 6px;
    background: #eff6ff;
    color: #2563eb;
    font-size: 11.5px;
    font-weight: 500;
}

.chip.other {
    border-color: #e2e8f0;
    background: #f8fafc;
    color: #475569;
}

.doc h3 {
    margin-top: 12px;
    font-size: 15.1px;
    font-weight: 500;
    line-height: 20px;
    color: #1e293b;
}

.pills {
    display: flex;
    gap: 8px;
    margin-top: 12px;
}

.pill {
    display: flex;
    align-items: center;
    gap: 4px;
    height: 24px;
    padding: 0 8px;
    border-radius: 12px;
    background: #f1f5f9;
    color: #64748b;
    font-size: 11.5px;
}

.pill .ico {
    stroke-width: 1.6;
}

.meta {
    display: flex;
    justify-content: space-between;
    align-items: center;
    margin-top: 12px;
    padding-top: 6px;
    border-top: 1px solid #f1f5f9;
    font-size: 11.5px;
    line-height: 20px;
    color: #94a3b8;
}

.meta span {
    display: flex;
    align-items: center;
    gap: 4px;
}

.actions {
    display: flex;
    gap: 8px;
    margin-top: 18px;
}

.btn-view,
.btn-get {
    display: flex;
    align-items: center;
    gap: 8px;
    flex-shrink: 0;
    height: 36px;
    border-radius: 8px;
    font-size: 13.5px;
    font-weight: 500;
}

.btn-view {
    padding: 0 16px;
    border: 1px solid #e2e8f0;
    background: #fff;
}

.btn-get {
    padding: 0 16px;
    color: #fff;
    background: linear-gradient(90deg, #6366f1, #a855f7);
}

/* bottom banner */
.cta {
    height: 300px;
    margin-top: 48px;
    display: flex;
    flex-direction: column;
    align-items: center;
    padding-top: 49px;
    border-radius: 24px;
    background: linear-gradient(135deg, #0f172a, #1e293b);
    color: #fff;
}

.cta-ico {
    width: 48px;
    height: 48px;
    color: #818cf8;
}

.cta h2 {
    margin-top: 16px;
    font-size: 28.3px;
    font-weight: 700;
    line-height: 36px;
}

.cta p {
    margin-top: 15px;
    font-size: 15px;
    line-height: 24px;
    color: #cbd5e1;
}

.cta-btn {
    margin-top: 24px;
    width: 204px;
    height: 40px;
    border-radius: 12px;
    background: #6366f1;
    font-size: 13px;
    font-weight: 600;
    line-height: 40px;
    text-align: center;
}

/* floating widgets */
.fab-head,
.fab-knot {
    position: absolute;
    right: 0;
    display: flex;
    align-items: center;
}

.fab-head {
    width: 41px;
    height: 35px;
    padding-left: 5px;
    border-radius: 18px 0 0 18px;
    background: #fff;
    box-shadow: 0 2px 8px rgba(0, 0, 0, 0.1);
}

.fab-head svg {
    width: 30px;
    height: 30px;
}

.fab-knot {
    width: 50px;
    height: 45px;
    padding-left: 10px;
    border-radius: 22px 0 0 22px;
    background: #111;
}

.fab-knot svg {
    width: 34px;
    height: 34px;
}

.t1 { top: 433px; }
.t2 { top: 865px; }
.t3 { top: 1297px; }
.t4 { top: 1863px; }
.k1 { top: 518px; }
.k2 { top: 950px; }
.k3 { top: 1382px; }
.k4 { top: 1948px; }
```
